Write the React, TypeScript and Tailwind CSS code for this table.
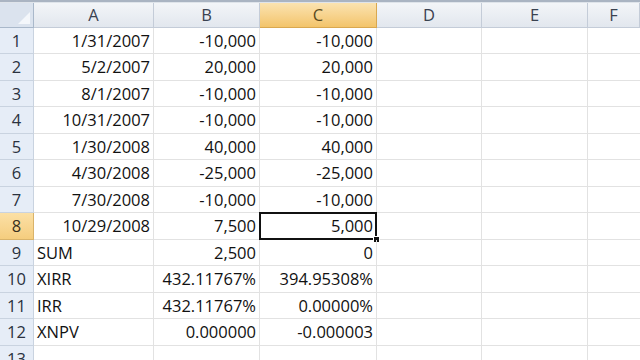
const cols = ["A", "B", "C", "D", "E", "F"];

type Row = { a?: string; aLeft?: boolean; b?: string; c?: string };

const rows: Row[] = [
  { a: "1/31/2007", b: "-10,000", c: "-10,000" },
  { a: "5/2/2007", b: "20,000", c: "20,000" },
  { a: "8/1/2007", b: "-10,000", c: "-10,000" },
  { a: "10/31/2007", b: "-10,000", c: "-10,000" },
  { a: "1/30/2008", b: "40,000", c: "40,000" },
  { a: "4/30/2008", b: "-25,000", c: "-25,000" },
  { a: "7/30/2008", b: "-10,000", c: "-10,000" },
  { a: "10/29/2008", b: "7,500", c: "5,000" },
  { a: "SUM", aLeft: true, b: "2,500", c: "0" },
  { a: "XIRR", aLeft: true, b: "432.11767%", c: "394.95308%" },
  { a: "IRR", aLeft: true, b: "432.11767%", c: "0.00000%" },
  { a: "XNPV", aLeft: true, b: "0.000000", c: "-0.000003" },
  {},
];

const grid = "grid grid-cols-[34px_120px_106px_117px_105px_106px_1fr]";

export default function App() {
  return (
    <div className="w-[640px] h-[360px] overflow-hidden bg-white text-[#111] font-['Open_Sans','Noto_Sans',sans-serif] text-[16.5px] leading-none">
      <div className="h-[2px] bg-[#aab4c2]" />
      <div className="h-px bg-[#dfe4ea]" />
      <div className={`${grid} h-[25px]`}>
        <div className="relative bg-[#dbe3ee] border-r border-b border-[#a9b8ca]">
          <svg className="absolute right-[3px] bottom-[3px]" width="12" height="12" viewBox="0 0 12 12">
            <path d="M12 0 L12 12 L0 12 Z" fill="#f4f7fb" />
          </svg>
        </div>
        {cols.map((c) =>
          c === "C" ? (
            <div
              key={c}
              className="flex items-center justify-center bg-gradient-to-b from-[#fbe3b0] to-[#f3c46a] border-r border-b border-[#d9a850] text-[#5a4a20]"
            >
              {c}
            </div>
          ) : (
            <div
              key={c}
              className="flex items-center justify-center bg-gradient-to-b from-[#f3f5f8] to-[#e2e7ee] border-r border-b border-[#c4ccd8] text-[#3a4250]"
            >
              {c}
            </div>
          )
        )}
      </div>
      {rows.map((r, i) => {
        const n = i + 1;
        const sel = n === 8;
        return (
          <div key={n} className={`${grid} ${i % 2 === 0 ? "h-[26px]" : "h-[27px]"}`}>
            <div
              className={
                sel
                  ? "flex items-center justify-center pt-[1px] bg-gradient-to-b from-[#fbe0a6] to-[#f5cd7e] border-r border-b border-[#d9b36a] text-[#3a3020]"
                  : "flex items-center justify-center pt-[1px] bg-[#e6edf7] border-r border-b border-[#c9d3e0] text-[#2a3240]"
              }
            >
              {n}
            </div>
            <div
              className={`flex items-center pt-[1px] border-r border-b border-[#e2e2e2] ${
                r.aLeft ? "justify-start pl-[3px]" : "justify-end pr-[3px]"
              }`}
            >
              {r.a}
            </div>
            <div className="flex items-center justify-end pt-[1px] pr-[3px] border-r border-b border-[#e2e2e2]">{r.b}</div>
            <div className="relative flex items-center justify-end pt-[1px] pr-[3px] border-r border-b border-[#e2e2e2]">
              {r.c}
              {sel && (
                <>
                  <span className="absolute -left-px -top-px -right-px -bottom-px border-2 border-[#111]" />
                  <span className="absolute -right-[3px] -bottom-[3px] w-[5px] h-[5px] bg-[#111] outline outline-1 outline-white" />
                </>
              )}
            </div>
            <div className="border-r border-b border-[#e2e2e2]" />
            <div className="border-r border-b border-[#e2e2e2]" />
            <div className="border-b border-[#e2e2e2]" />
          </div>
        );
      })}
    </div>
  );
}
